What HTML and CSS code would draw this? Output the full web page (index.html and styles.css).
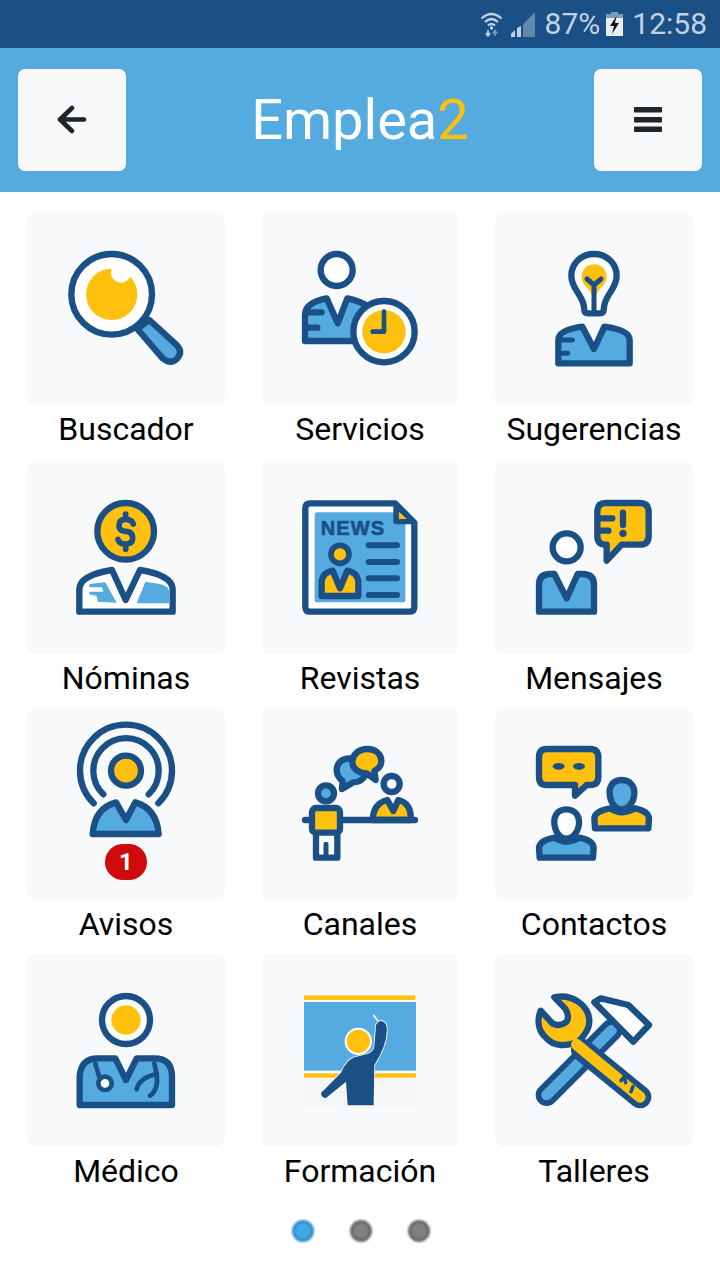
FILE: index.html
```html
<!DOCTYPE html>
<html lang="es">
<head>
<meta charset="utf-8">
<title>Emplea2</title>
<link rel="stylesheet" href="styles.css">
</head>
<body>
<div class="status">
  <svg class="st-wifi" width="24" height="26" viewBox="0 0 24 26"><g fill="none" stroke="#c3d2e2" stroke-width="2.2"><path d="M1.500 7.500 Q11.500 -1.500 21.500 7.500"/><path d="M5 11 Q11.500 5 18 11"/><path d="M8 14.500 Q11.500 11.500 15 14.500"/></g><circle cx="11.500" cy="17" r="1.700" fill="#c3d2e2"/><path d="M8 19 V24 M5.800 22 L8 25 L10.200 22" fill="none" stroke="#c3d2e2" stroke-width="1.600"/><path d="M15 25 V20 M12.800 22.500 L15 19.500 L17.200 22.500" fill="none" stroke="#7d9cbc" stroke-width="1.600"/></svg>
  <svg class="st-signal" width="24" height="25" viewBox="0 0 24 25"><path d="M24 0 V25 H12 V12 Z" fill="#6288ad"/><path d="M0 25 V22 L4 18 V25 Z M6 25 V16 L10 14 V25 Z" fill="#c3d2e2"/></svg>
  <span class="st-pct">87%</span>
  <svg class="st-batt" width="17" height="24" viewBox="0 0 17 24"><path d="M5 0 H12 V2 H17 V24 H0 V2 H5 Z" fill="#7d9cbc"/><rect y="6" width="17" height="18" fill="#e8edf2"/><path d="M10.500 4 L4 14 H8 L6 22 L13 11 H9 Z" fill="#111"/></svg>
  <span class="st-time">12:58</span>
</div>

<header class="topbar">
  <button class="hbtn" aria-label="Atrás"><svg width="30" height="30" viewBox="0 0 30 30"><path d="M27 14.500 H5 M15 3 L3 14.500 L15 26" fill="none" stroke="#212529" stroke-width="4.600" stroke-linecap="round" stroke-linejoin="round"/></svg></button>
  <h1 class="title">Emplea<span class="title-num">2</span></h1>
  <button class="hbtn" aria-label="Menú"><svg class="burger" width="28" height="25" viewBox="0 0 28 25"><path d="M1 0 H27 Q28 0 28 1 V4.500 Q28 5.500 27 5.500 H1 Q0 5.500 0 4.500 V1 Q0 0 1 0 Z M1 10 H27 Q28 10 28 11 V14.500 Q28 15.500 27 15.500 H1 Q0 15.500 0 14.500 V11 Q0 10 1 10 Z M1 19.500 H27 Q28 19.500 28 20.500 V24 Q28 25 27 25 H1 Q0 25 0 24 V20.500 Q0 19.500 1 19.500 Z" fill="#212529"/></svg></button>
</header>

<main class="grid">
  <a class="item">
    <div class="tile"><svg class="icon" viewBox="21 21 594 579"><g stroke="#1a5086" stroke-width="19" stroke-linejoin="round">
      <path d="M352 372 L388 345 L468 418 Q490 440 472 460 Q453 480 428 460 Z" fill="#55aae0"/>
      <circle cx="275" cy="268" r="121" fill="#fff"/></g>
      <circle cx="275" cy="268" r="77" fill="#ffc10e"/><circle cx="303" cy="203" r="30" fill="#fff"/>
    </svg></div>
    <span class="label">Buscador</span>
  </a>
  <a class="item">
    <div class="tile"><svg class="icon" viewBox="3 21 594 579"><g stroke="#1a5086" stroke-width="19" stroke-linejoin="round" stroke-linecap="round">
      <circle cx="230" cy="195" r="48" fill="#fff"/>
      <path d="M135 408 V330 Q135 292 200 280 L233 355 L262 280 Q300 287 335 310 V408 Z" fill="#55aae0"/>
      <path d="M140 322 H185 M140 368 H172" fill="none"/>
      <circle cx="372" cy="380" r="92" fill="#fff"/></g>
      <circle cx="372" cy="380" r="65" fill="#ffc10e"/>
      <path d="M372 320 V380 H338" fill="none" stroke="#1a5086" stroke-width="14" stroke-linecap="round" stroke-linejoin="round"/>
    </svg></div>
    <span class="label">Servicios</span>
  </a>
  <a class="item">
    <div class="tile"><svg class="icon" viewBox="0 21 594 579"><g stroke="#1a5086" stroke-width="19" stroke-linejoin="round" stroke-linecap="round">
      <path d="M297 147 C335 147 365 175 365 212 C365 250 335 265 328 300 L326 315 Q325 325 315 325 L279 325 Q269 325 268 315 L266 300 C258 265 229 250 229 212 C229 175 259 147 297 147 Z" fill="#fff"/>
      <path d="M190 475 V405 Q190 375 262 365 L297 432 L328 365 Q404 375 404 405 V475 Z" fill="#55aae0"/>
      <path d="M195 405 H232 M195 445 H218" fill="none" stroke-width="15"/></g>
      <path d="M297 178 C320 178 335 195 335 218 C335 238 310 250 305 268 H289 C284 250 260 238 260 218 C260 195 275 178 297 178 Z" fill="#ffc10e"/>
      <path d="M276 222 L297 240 L318 222 M297 240 V320" fill="none" stroke="#1a5086" stroke-width="15" stroke-linecap="round" stroke-linejoin="round"/>
    </svg></div>
    <span class="label">Sugerencias</span>
  </a>
  <a class="item">
    <div class="tile"><svg class="icon" viewBox="3 3 594 579"><g stroke="#1a5086" stroke-width="19" stroke-linejoin="round">
      <circle cx="299" cy="214" r="85" fill="#ffc10e"/>
      <path d="M160 455 V385 Q165 345 258 330 L299 420 L342 330 Q435 345 440 385 V455 Z" fill="#fff"/></g>
      <path d="M322 192 Q318 178 299 178 Q279 178 279 196 Q279 214 299 214 Q320 214 320 234 Q320 252 299 252 Q279 252 276 238 M299 162 V172 M299 258 V268" fill="none" stroke="#1a5086" stroke-width="17" stroke-linecap="round"/>
      <path d="M190 372 L238 367 L272 428 L215 425 L212 408 L190 403 V395 L232 395 L228 382 L190 382 Z" fill="#55aae0"/>
      <path d="M358 365 L405 373 Q430 380 430 398 V430 L332 430 Z" fill="#55aae0"/>
    </svg></div>
    <span class="label">Nóminas</span>
  </a>
  <a class="item">
    <div class="tile"><svg class="icon" viewBox="3 3 594 579">
      <path d="M150 130 H405 L463 188 V440 Q463 455 448 455 H150 Q136 455 136 440 V145 Q136 130 150 130 Z" fill="#fff" stroke="#1a5086" stroke-width="19" stroke-linejoin="round"/>
      <rect x="164" y="157" width="272" height="270" rx="8" fill="#55aae0"/>
      <path d="M407 135 V186 H460 Z" fill="#1a5086" stroke="#1a5086" stroke-width="14" stroke-linejoin="round"/>
      <path d="M417 155 L440 177 H417 Z" fill="#ffc10e"/>
      <text class="news" x="182" y="225" textLength="190">NEWS</text>
      <g stroke="#1a5086" stroke-linejoin="round" stroke-linecap="round">
        <circle cx="240" cy="283" r="27" fill="#ffc10e" stroke-width="17"/>
        <path d="M185 408 V362 Q190 337 218 332 L240 385 L262 332 Q290 337 295 362 V408 Z" fill="#ffc10e" stroke-width="19"/>
        <path d="M326 256 H411 M326 306 H411 M326 355 H411 M326 405 H411" fill="none" stroke-width="18"/>
      </g>
    </svg></div>
    <span class="label">Revistas</span>
  </a>
  <a class="item">
    <div class="tile"><svg class="icon" viewBox="0 3 594 579"><g stroke="#1a5086" stroke-width="19" stroke-linejoin="round" stroke-linecap="round">
      <circle cx="215" cy="262" r="42" fill="#fff"/>
      <path d="M132 455 V375 Q132 342 165 342 H178 L215 415 L248 342 H262 Q297 342 297 375 V455 Z" fill="#55aae0"/>
      <path d="M332 129 H435 Q461 129 461 155 V228 Q461 254 435 254 H380 L335 302 V254 H332 Q307 254 307 228 V155 Q307 129 332 129 Z" fill="#ffc10e"/>
      <path d="M312 175 H352 M312 212 H340 M384 158 V195" fill="none"/></g>
      <circle cx="384" cy="220" r="11" fill="#1a5086"/>
    </svg></div>
    <span class="label">Mensajes</span>
  </a>
  <a class="item">
    <div class="tile tile-short"><svg class="icon" viewBox="3 9 594 576"><g stroke="#1a5086" stroke-width="19" stroke-linejoin="round" stroke-linecap="round" fill="none">
      <path d="M203 295 A138 138 0 1 1 397 295"/>
      <path d="M232 268 A98 98 0 1 1 368 268"/>
      <circle cx="300" cy="197" r="45" fill="#ffc10e"/>
      <path d="M200 387 Q205 310 270 292 L300 345 L328 292 Q392 310 398 387 Z" fill="#55aae0"/>
    </g></svg><span class="badge">1</span></div>
    <span class="label">Avisos</span>
  </a>
  <a class="item">
    <div class="tile tile-short"><svg class="icon" viewBox="3 9 594 576"><g stroke="#1a5086" stroke-width="19" stroke-linejoin="round" stroke-linecap="round">
      <path d="M270 160 C245 160 230 175 230 195 C230 212 240 222 248 228 L246 252 L280 232 C305 232 318 215 318 195 C318 175 295 160 270 160 Z" fill="#55aae0"/>
      <path d="M322 132 C295 132 277 150 277 170 C277 190 295 205 320 205 L347 225 L343 198 C358 190 364 180 364 168 C364 148 348 132 322 132 Z" fill="#ffc10e"/>
      <circle cx="198" cy="265" r="24" fill="#55aae0"/>
      <circle cx="395" cy="237" r="24" fill="#fff"/>
      <path d="M338 345 Q340 295 382 285 L400 318 L415 285 Q455 295 452 345 Z" fill="#ffc10e"/>
      <path d="M135 345 H465" fill="none"/>
      <path d="M168 385 V458 H232 V385" fill="#fff"/>
      <path d="M198 418 V458" fill="none" stroke-width="15"/>
      <rect x="156" y="309" width="84" height="74" rx="12" fill="#ffc10e"/>
    </g></svg></div>
    <span class="label">Canales</span>
  </a>
  <a class="item">
    <div class="tile tile-short"><svg class="icon" viewBox="0 9 594 576"><g stroke="#1a5086" stroke-width="19" stroke-linejoin="round" stroke-linecap="round">
      <path d="M155 132 H285 Q310 132 310 157 V215 Q310 240 285 240 H275 L240 272 V240 H155 Q132 240 132 215 V157 Q132 132 155 132 Z" fill="#ffc10e"/>
      <path d="M300 370 L298 340 Q300 318 345 310 Q365 322 380 322 Q395 322 420 310 Q460 318 462 340 L460 370 Z" fill="#ffc10e"/>
      <path d="M380 225 C350 225 340 250 345 275 C350 300 365 313 380 313 C395 313 412 300 417 275 C422 250 410 225 380 225 Z" fill="#55aae0"/>
      <path d="M134 458 L132 428 Q134 406 179 398 Q199 410 214 410 Q229 410 254 398 Q294 406 296 428 L294 458 Z" fill="#55aae0"/>
      <path d="M214 313 C184 313 174 338 179 363 C184 388 199 401 214 401 C229 401 246 388 251 363 C256 338 244 313 214 313 Z" fill="#fff"/></g>
      <ellipse cx="191" cy="184" rx="18" ry="10" fill="#1a5086"/><ellipse cx="252" cy="184" rx="18" ry="10" fill="#1a5086"/>
    </svg></div>
    <span class="label">Contactos</span>
  </a>
  <a class="item">
    <div class="tile tile-short"><svg class="icon" viewBox="3 12 594 576"><g stroke="#1a5086" stroke-width="19" stroke-linejoin="round" stroke-linecap="round">
      <circle cx="300" cy="210" r="72" fill="#fff"/>
      <path d="M161 465 V380 Q165 325 215 325 H268 L300 390 L332 325 H385 Q438 325 438 380 V465 Z" fill="#55aae0"/></g>
      <circle cx="300" cy="210" r="44" fill="#ffc10e"/>
      <g fill="none" stroke="#1a5086" stroke-width="14" stroke-linecap="round">
        <path d="M208 340 L220 382"/><circle cx="237" cy="400" r="20" fill="#fff"/>
        <path d="M385 340 L392 372 Q398 420 372 437"/><path d="M332 418 Q338 385 392 372"/>
      </g>
    </svg></div>
    <span class="label label-low">Médico</span>
  </a>
  <a class="item">
    <div class="tile tile-short"><svg class="icon" viewBox="705 12 594 576">
      <defs><pattern id="hatch" width="9" height="9" patternUnits="userSpaceOnUse" patternTransform="rotate(-45)"><rect width="9" height="9" fill="#f8f9fa"/><rect width="9" height="3" fill="#eef0f2"/></pattern></defs>
      <rect x="834" y="136" width="334" height="14" fill="#ffc10e"/>
      <rect x="834" y="156" width="336" height="206" fill="#55aae0"/>
      <rect x="834" y="370" width="336" height="13" fill="#ffc10e"/>
      <rect x="834" y="385" width="338" height="85" fill="url(#hatch)"/>
      <path d="M1042 195 L1056 213" fill="none" stroke="#fff" stroke-width="5"/>
      <path class="figure" d="M885 432 Q885 425 892 422 L945 368 Q962 330 985 322 L1025 312 Q1042 305 1045 290 L1050 225 Q1062 205 1076 218 Q1084 225 1082 245 Q1082 285 1045 345 L1043 466 H965 L960 395 L900 444 Q888 444 885 432 Z"/>
      <circle class="face" cx="997" cy="274" r="38"/>
    </svg></div>
    <span class="label label-low">Formación</span>
  </a>
  <a class="item">
    <div class="tile tile-short"><svg class="icon" viewBox="0 12 594 576"><g stroke-linecap="round" stroke-linejoin="round">
      <path d="M155 435 L350 240" stroke="#1a5086" stroke-width="66" fill="none"/>
      <path d="M155 435 L350 240" stroke="#55aae0" stroke-width="32" fill="none"/>
      <path d="M298 157 L318 145 L400 165 L462 225 L415 275 Z" fill="#fff" stroke="#1a5086" stroke-width="19"/>
      <path d="M262 300 L435 441" stroke="#1a5086" stroke-width="68" fill="none"/>
      <path d="M178 142 C230 130 283 165 283 215 C283 235 270 255 250 275 C215 290 175 290 155 265 C125 240 128 205 137 182 L172 220 Q195 232 215 215 Q225 195 210 175 Z" fill="#ffc10e" stroke="#1a5086" stroke-width="19"/>
      <path d="M245 284 L435 441" stroke="#ffc10e" stroke-width="34" fill="none"/>
      <path d="M378 392 L388 380 L392 398 M408 425 L414 410" fill="none" stroke="#1a5086" stroke-width="11"/>
    </g></svg></div>
    <span class="label label-low">Talleres</span>
  </a>
</main>

<nav class="dots">
  <span class="dot dot-on"></span><span class="dot"></span><span class="dot"></span>
</nav>
</body>
</html>
```
FILE: styles.css
```css
* { box-sizing: border-box; }
html, body { margin: 0; padding: 0; }
body { width: 720px; height: 1280px; overflow: hidden; background: #fff; font-family: Roboto, "Noto Sans", sans-serif; color: #000; }

.status { height: 48px; background: #1a5086; display: flex; align-items: center; justify-content: flex-end; padding-right: 13px; color: #c3d2e2; font-size: 30px; }
.st-wifi { margin-right: 7px; }
.st-signal { margin-right: 10px; }
.st-pct { margin-right: 6px; line-height: 50px; }
.st-batt { margin-right: 9px; }
.st-time { line-height: 50px; }

.topbar { height: 144px; background: #55aae0; display: flex; align-items: center; justify-content: space-between; padding: 0 18px; }
.hbtn { width: 108px; height: 102px; border: 0; padding: 0; border-radius: 7px; background: #f8f9fa; display: flex; align-items: center; justify-content: center; }
.burger { margin-top: -1px; }
.title { margin: 0; font-size: 56px; font-weight: 400; color: #fff; line-height: 1; }
.title-num { color: #ffc10e; }

.grid { display: grid; grid-template-columns: repeat(3, 198px); grid-template-rows: 249px 247px 246px 246px; column-gap: 36px; padding: 20px 27px 0; }
.item { display: flex; flex-direction: column; align-items: center; }
.tile { position: relative; width: 198px; height: 193px; border-radius: 8px; background: #f8f9fa; }
.tile-short { height: 192px; }
.icon { display: block; width: 198px; height: 100%; }
.label { font-size: 32px; line-height: 48px; white-space: nowrap; }
.label-low { padding-top: 1px; }
.news { font-family: "Liberation Sans", sans-serif; font-weight: 700; font-size: 60px; fill: #1a5086; stroke: #1a5086; stroke-width: 2; }
.figure { fill: #1a5086; stroke: #f8f9fa; stroke-width: 5; paint-order: stroke; }
.face { fill: #ffc10e; stroke: #fff; stroke-width: 6; }
.badge { position: absolute; left: 78px; top: 136px; width: 42px; height: 36px; border-radius: 18px; background: #d10a0e; color: #fff; font-weight: 700; font-size: 24px; line-height: 36px; text-align: center; }

.dots { display: flex; justify-content: center; gap: 36px; margin-top: 20px; padding-left: 2px; }
.dot { width: 22px; height: 22px; border-radius: 50%; background: #808080; border: 3px solid #666; filter: blur(1.2px); }
.dot-on { background: #45a6e8; border-color: #2a8ccc; }
```
